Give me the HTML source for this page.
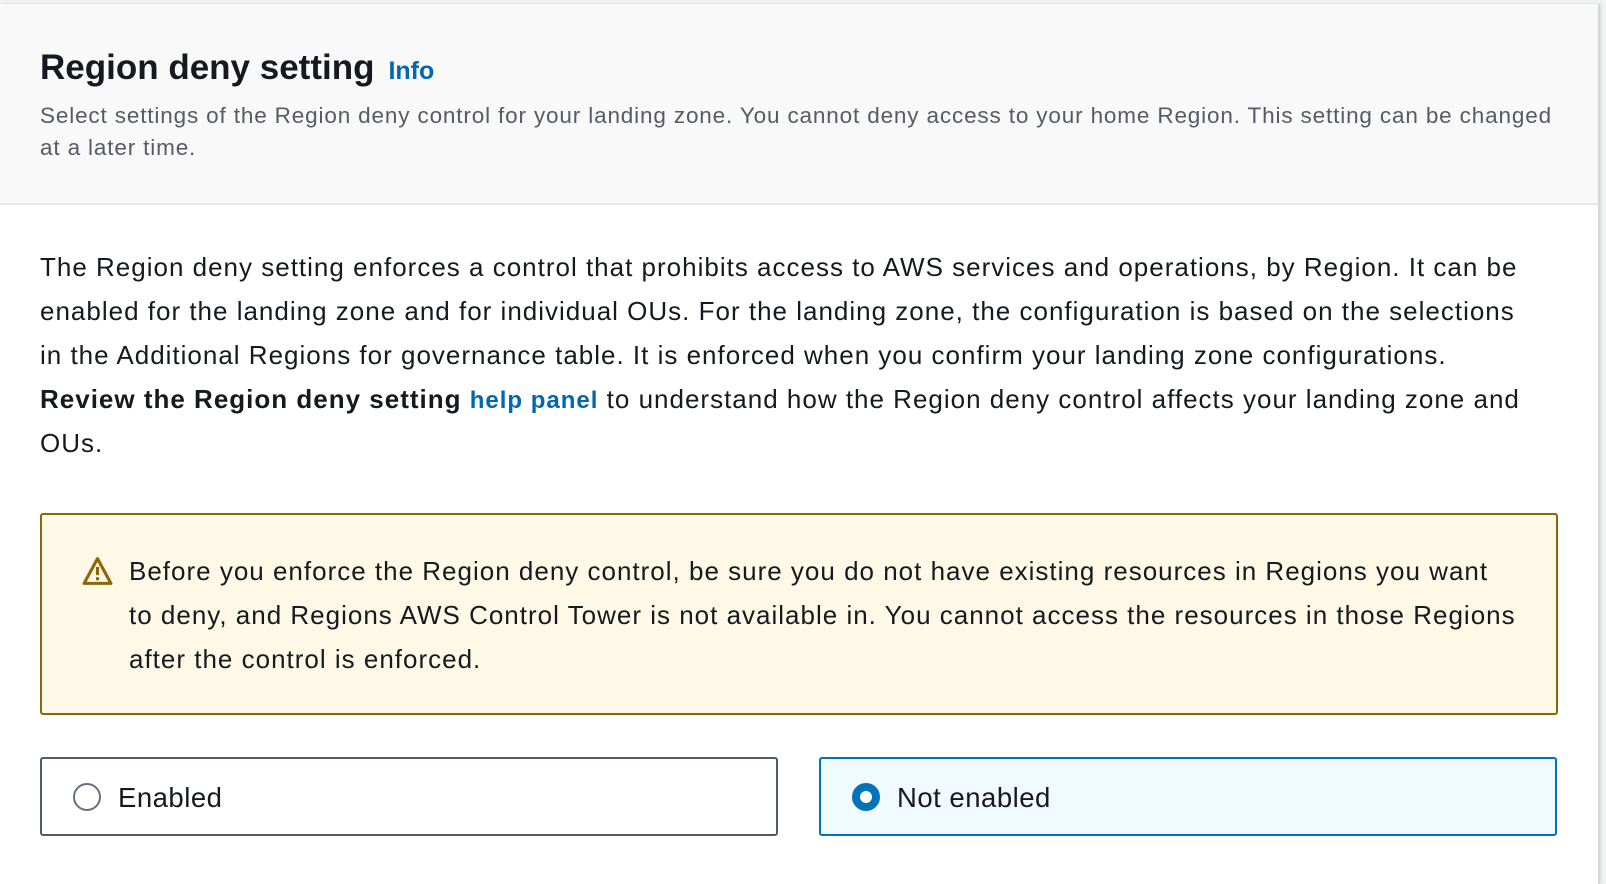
<!DOCTYPE html>
<html><head><meta charset="utf-8"><style>
body{margin:0;width:1606px;height:872px;background:#f1f2f2;font-family:"Liberation Sans",sans-serif;overflow:hidden;position:relative}
.panel{position:absolute;left:0;top:4px;width:1598px;height:880px;background:#fff;border-right:2px solid #d5d9d9;box-shadow:1px 0 3px rgba(0,0,0,.1)}
.hdr{position:absolute;left:0;top:0;width:1598px;height:199px;background:#f9f9f9;border-bottom:2px solid #e6e8e8}
.t{position:absolute;white-space:nowrap;line-height:1}
h1{position:absolute;left:40px;top:46px;margin:0;font-size:35px;line-height:1;font-weight:bold;color:#16191f;white-space:nowrap}
h1 span{font-size:25px;color:#0067b0;margin-left:14px}
.d{left:40px;font-size:22.5px;letter-spacing:.85px;color:#545b64}
.b{left:40px;font-size:26px;letter-spacing:1px;color:#16191f}
.alert{position:absolute;left:40px;top:509px;width:1514px;height:198px;background:#fef8e6;border:2px solid #8d6605;border-radius:3px}
.tile{position:absolute;top:753px;width:734px;height:75px;border:2px solid #545b64;border-radius:3px;background:#fff}
</style></head><body>
<div class="panel">
<div class="hdr">
<h1>Region deny setting<span>Info</span></h1>
<div class="t d" style="top:101px">Select settings of the Region deny control for your landing zone. You cannot deny access to your home Region. This setting can be changed</div>
<div class="t d" style="top:133px">at a later time.</div>
</div>
<div class="t b" style="top:250px">The Region deny setting enforces a control that prohibits access to AWS services and operations, by Region. It can be</div>
<div class="t b" style="top:294px">enabled for the landing zone and for individual OUs. For the landing zone, the configuration is based on the selections</div>
<div class="t b" style="top:338px">in the Additional Regions for governance table. It is enforced when you confirm your landing zone configurations.</div>
<div class="t b" style="top:382px"><b>Review the Region deny setting</b> <b style="color:#0067b0;font-size:24px">help panel</b> to understand how the Region deny control affects your landing zone and</div>
<div class="t b" style="top:426px">OUs.</div>
<div class="alert">
<svg style="position:absolute;left:39px;top:40px" width="33" height="32" viewBox="0 0 32 30"><path d="M16 3 L29 27 H3 Z" fill="none" stroke="#8d6605" stroke-width="3" stroke-linejoin="round"/><rect x="14.5" y="11" width="3" height="8" fill="#8d6605"/><rect x="14.5" y="21" width="3" height="3" fill="#8d6605"/></svg>
<div class="t b" style="left:87px;top:43px">Before you enforce the Region deny control, be sure you do not have existing resources in Regions you want</div>
<div class="t b" style="left:87px;top:87px">to deny, and Regions AWS Control Tower is not available in. You cannot access the resources in those Regions</div>
<div class="t b" style="left:87px;top:131px">after the control is enforced.</div>
</div>
<div class="tile" style="left:40px">
<div style="position:absolute;left:31px;top:24px;width:28px;height:28px;border:2px solid #687078;border-radius:50%;box-sizing:border-box"></div>
<div class="t b" style="left:76px;top:25px;font-size:27.5px;letter-spacing:.5px">Enabled</div>
</div>
<div class="tile" style="left:819px;border-color:#0073bb;background:#f1faff">
<div style="position:absolute;left:31px;top:24px;width:28px;height:28px;border:8px solid #0073bb;border-radius:50%;box-sizing:border-box;background:#fff"></div>
<div class="t b" style="left:76px;top:25px;font-size:27.5px;letter-spacing:.5px">Not enabled</div>
</div>
</div>
</body></html>
